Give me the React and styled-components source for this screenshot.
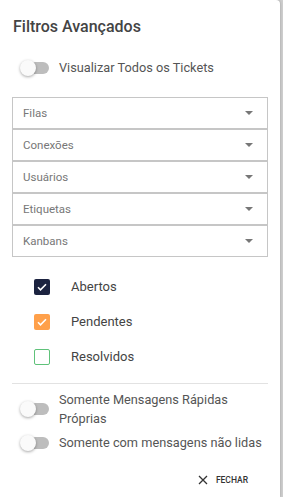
import React from 'react';
import styled, { createGlobalStyle } from 'styled-components';

const GlobalStyle = createGlobalStyle`
    html, body {
        margin: 0;
        padding: 0;
        background: #cfcfcf;
        font-family: Roboto, "Liberation Sans", sans-serif;
    }
`;

const Card = styled.div`
    width: 280px;
    min-height: 497px;
    box-sizing: border-box;
    background: #ffffff;
    border-top-right-radius: 4px;
    box-shadow: 0 0 3px rgba(0, 0, 0, 0.25);
    padding: 16px 11px 8px 12px;
    display: flex;
    flex-direction: column;
`;

const Title = styled.div`
    font-size: 16px;
    line-height: 22px;
    font-weight: 500;
    color: #444;
    padding-left: 1px;
`;

const ToggleRow = styled.div`
    display: flex;
    align-items: center;
    gap: 10px;
    padding-left: 8px;
    margin-top: ${(p) => p.$top || 0}px;
`;

const Switch = styled.div`
    position: relative;
    flex: none;
    width: 29px;
    height: 18px;

    &::before {
        content: '';
        position: absolute;
        left: 4px;
        top: 3px;
        width: 25px;
        height: 12px;
        border-radius: 6px;
        background: #bdbdbd;
    }

    &::after {
        content: '';
        position: absolute;
        left: 0;
        top: 1px;
        width: 16px;
        height: 16px;
        border-radius: 50%;
        background: #fafafa;
        box-shadow: 0 1px 3px rgba(0, 0, 0, 0.35);
    }
`;

const ToggleLabel = styled.div`
    font-size: 12.75px;
    line-height: 19px;
    color: #555;
    white-space: nowrap;
`;

const SelectGroup = styled.div`
    display: flex;
    flex-direction: column;
    margin-top: 20px;
    width: 256px;
`;

const Select = styled.div`
    height: 32px;
    box-sizing: border-box;
    border: 1px solid #c6c6c6;
    display: flex;
    align-items: center;
    justify-content: space-between;
    padding: 0 14px 0 10px;
    font-size: 11.5px;
    color: #777;
`;

const Arrow = styled.span`
    width: 0;
    height: 0;
    border-left: 4.5px solid transparent;
    border-right: 4.5px solid transparent;
    border-top: 4.5px solid #777;
`;

const CheckList = styled.div`
    display: flex;
    flex-direction: column;
    gap: 19px;
    margin-top: 22px;
    padding-left: 22px;
`;

const CheckRow = styled.div`
    display: flex;
    align-items: center;
    gap: 21px;
`;

const Box = styled.div`
    width: 16px;
    height: 16px;
    box-sizing: border-box;
    border-radius: 2px;
    background: ${(p) => (p.$checked ? p.$color : '#fff')};
    border: ${(p) => (p.$checked ? 'none' : `1.5px solid ${p.$color}`)};
    display: flex;
    align-items: center;
    justify-content: center;
`;

const CheckLabel = styled.div`
    font-size: 13px;
    line-height: 16px;
    color: #444;
`;

const Divider = styled.div`
    height: 1px;
    background: #e2e2e2;
    margin-top: 18px;
    width: 256px;
`;

const Footer = styled.div`
    display: flex;
    justify-content: flex-end;
    padding-right: 21px;
    margin-top: 23px;
`;

const CloseButton = styled.div`
    display: flex;
    align-items: center;
    gap: 8px;
    font-size: 8.5px;
    font-weight: 500;
    color: #333;
`;

const Check = () => (
    <svg width="12" height="12" viewBox="0 0 24 24">
        <path d="M4 12.5l5 5L20 6.5" fill="none" stroke="#fff" strokeWidth="3.2" />
    </svg>
);

const statuses = [
    { label: 'Abertos', color: '#1c2340', checked: true },
    { label: 'Pendentes', color: '#ffa04a', checked: true },
    { label: 'Resolvidos', color: '#5fc27a', checked: false },
];

function App() {
    const selects = ['Filas', 'Conexões', 'Usuários', 'Etiquetas', 'Kanbans'];

    return (
        <>
            <GlobalStyle />
            <Card>
                <Title>Filtros Avançados</Title>

                <ToggleRow $top={20}>
                    <Switch />
                    <ToggleLabel>Visualizar Todos os Tickets</ToggleLabel>
                </ToggleRow>

                <SelectGroup>
                    {selects.map((s) => (
                        <Select key={s}>
                            {s}
                            <Arrow />
                        </Select>
                    ))}
                </SelectGroup>

                <CheckList>
                    {statuses.map((s) => (
                        <CheckRow key={s.label}>
                            <Box $checked={s.checked} $color={s.color}>
                                {s.checked && <Check />}
                            </Box>
                            <CheckLabel>{s.label}</CheckLabel>
                        </CheckRow>
                    ))}
                </CheckList>

                <Divider />

                <ToggleRow $top={6}>
                    <Switch />
                    <ToggleLabel>Somente Mensagens Rápidas<br />Próprias</ToggleLabel>
                </ToggleRow>

                <ToggleRow $top={5}>
                    <Switch />
                    <ToggleLabel>Somente com mensagens não lidas</ToggleLabel>
                </ToggleRow>

                <Footer>
                    <CloseButton>
                        <svg width="10" height="10" viewBox="0 0 10 10">
                            <path d="M1 1L9 9M9 1L1 9" stroke="#333" strokeWidth="1.3" />
                        </svg>
                        FECHAR
                    </CloseButton>
                </Footer>
            </Card>
        </>
    );
}

export default App;
